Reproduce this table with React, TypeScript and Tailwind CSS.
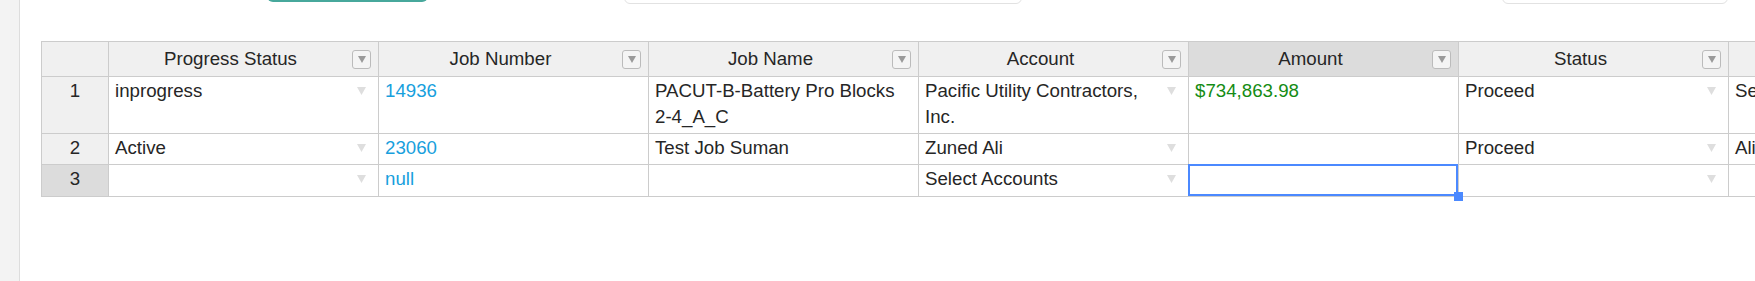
import React from 'react';

type Cell = {
  text?: string;
  tone?: 'link' | 'money';
  dropdown?: boolean;
};

const columns = [
  'Progress Status',
  'Job Number',
  'Job Name',
  'Account',
  'Amount',
  'Status',
  'Estimator',
];

const rows: Cell[][] = [
  [
    { text: 'inprogress', dropdown: true },
    { text: '14936', tone: 'link' },
    { text: 'PACUT-B-Battery Pro Blocks 2-4_A_C' },
    { text: 'Pacific Utility Contractors, Inc.', dropdown: true },
    { text: '$734,863.98', tone: 'money' },
    { text: 'Proceed', dropdown: true },
    { text: 'Select' },
  ],
  [
    { text: 'Active', dropdown: true },
    { text: '23060', tone: 'link' },
    { text: 'Test Job Suman' },
    { text: 'Zuned Ali', dropdown: true },
    {},
    { text: 'Proceed', dropdown: true },
    { text: 'Ali' },
  ],
  [
    { dropdown: true },
    { text: 'null', tone: 'link' },
    {},
    { text: 'Select Accounts', dropdown: true },
    {},
    { dropdown: true },
    {},
  ],
];

const rowHeights = ['h-[57px]', 'h-[31px]', 'h-[32px]'];

const SELECTED_COL = 4;
const SELECTED_ROW = 2;

const CellArrow = () => (
  <svg width="9" height="8" viewBox="0 0 9 8" className="shrink-0 mt-[9px] ml-2">
    <polygon points="0,0 9,0 4.5,8" fill="#dedede" />
  </svg>
);

const FilterButton = () => (
  <div className="w-[19px] h-[19px] shrink-0 mr-[7px] flex items-center justify-center rounded-[3px] border border-[#bbbbbb] bg-[#f4f4f4]">
    <svg width="8" height="7" viewBox="0 0 8 7">
      <polygon points="0,0 8,0 4,7" fill="#9a9a9a" />
    </svg>
  </div>
);

const App = () => {
  return (
    <div className="flex w-[1755px] h-[281px] overflow-hidden bg-white font-['Liberation_Sans',Arial,sans-serif] text-[18.7px] text-[#262626]">
      {/* side rail */}
      <div className="w-[20px] shrink-0 bg-[#f3f3f3] border-r border-[#dddddd]" />

      <div className="flex-1 min-w-0 overflow-hidden">
        {/* toolbar, scrolled mostly out of view */}
        <div className="flex items-end h-[38px] -mt-[34px]">
          <div className="ml-[247px] w-[161px] h-[36px] mb-[2px] rounded-md bg-[#47a89c]" />
          <div className="ml-[196px] w-[398px] h-[38px] rounded-md border border-[#e2e2e2] bg-white" />
          <div className="ml-[480px] w-[226px] h-[38px] rounded-md border border-[#e2e2e2] bg-white" />
        </div>

        {/* spreadsheet grid */}
        <div className="ml-[21px] mt-[37px] w-max border-l border-t border-[#cccccc]">
          <div className="grid grid-cols-[67px_repeat(7,270px)]">
            <div className="h-[35px] bg-[#f0f0f0] border-r border-b border-[#cccccc]" />
            {columns.map((name, i) => (
              <div
                key={name}
                className={`h-[35px] flex items-center border-r border-b border-[#cccccc] ${
                  i === SELECTED_COL ? 'bg-[#dcdcdc]' : 'bg-[#f0f0f0]'
                }`}
              >
                <span className="flex-1 text-center whitespace-nowrap">{name}</span>
                <FilterButton />
              </div>
            ))}

            {rows.map((row, r) => (
              <React.Fragment key={r}>
                <div
                  className={`${rowHeights[r]} pt-[1px] leading-[26px] text-center border-r border-b border-[#cccccc] ${
                    r === SELECTED_ROW ? 'bg-[#dcdcdc]' : 'bg-[#f0f0f0]'
                  }`}
                >
                  {r + 1}
                </div>
                {row.map((cell, c) => {
                  const color =
                    cell.tone === 'link'
                      ? 'text-[#17a0dd]'
                      : cell.tone === 'money'
                      ? 'text-[#148c14]'
                      : 'text-[#262626]';
                  const selected = r === SELECTED_ROW && c === SELECTED_COL;
                  return (
                    <div
                      key={c}
                      className={`${rowHeights[r]} relative flex items-start pt-[1px] pl-[6px] pr-[12px] leading-[26px] bg-white border-r border-b border-[#cccccc]`}
                    >
                      <span className={`flex-1 min-w-0 ${color}`}>{cell.text}</span>
                      {cell.dropdown && <CellArrow />}
                      {selected && (
                        <>
                          <div className="absolute z-10 -top-px -left-px right-0 bottom-0 border-2 border-[#4b89ff]" />
                          <div className="absolute z-20 -right-[5px] -bottom-[5px] w-[9px] h-[9px] bg-[#4b89ff]" />
                        </>
                      )}
                    </div>
                  );
                })}
              </React.Fragment>
            ))}
          </div>
        </div>
      </div>
    </div>
  );
};

export default App;
